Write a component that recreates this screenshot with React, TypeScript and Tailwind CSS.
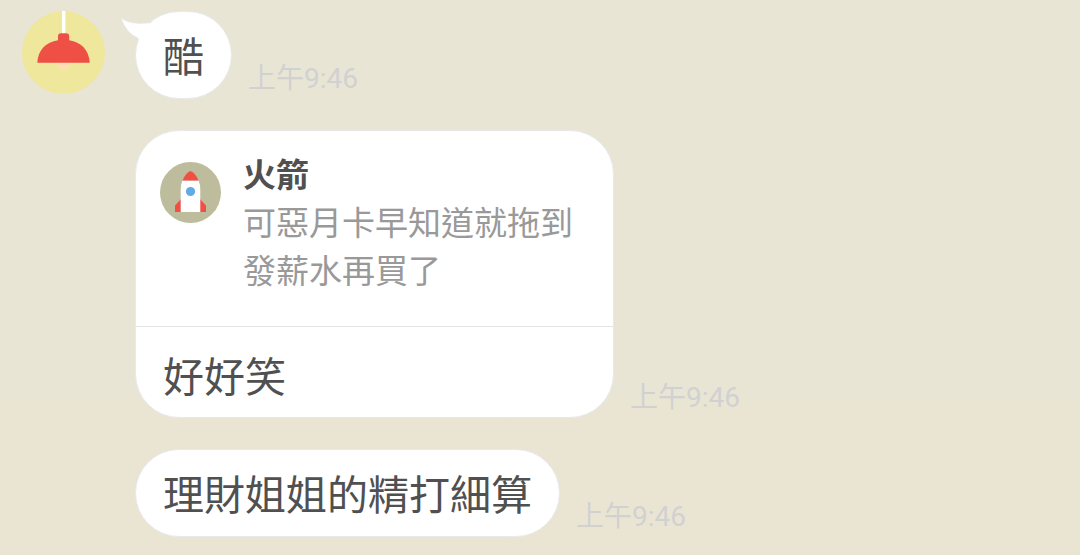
import type { ReactNode } from "react";

function LampAvatar() {
  return (
    <svg viewBox="0 0 84 84" className="block size-[84px]" role="img" aria-label="吊燈">
      <circle cx="42.5" cy="41.5" r="41.5" fill="#eee79c" />
      <rect x="41" y="0" width="3.4" height="24" fill="#fff" />
      <circle cx="42.6" cy="51.8" r="7" fill="#ffdfb0" />
      <path d="M16.3 51.8C17 39 25 31 37 29.300V25.500Q37 22.300 40.200 22.300H45Q48.200 22.300 48.200 25.500V29.300C60 31 68 39 68.800 51.800z" fill="#ee5045" />
    </svg>
  );
}

function RocketAvatar() {
  return (
    <svg viewBox="0 0 61 61" className="block size-[61px] shrink-0" role="img" aria-label="火箭">
      <circle cx="30.500" cy="30.500" r="30.500" fill="#bdbc9c" />
      <path d="M15 50V43.500L21 37V50zM46 50V43.500L40 37V50z" fill="#ee5045" />
      <path d="M20.700 50V28Q20.700 22 22.500 18.500H38.500Q40.300 22 40.300 28V50z" fill="#fff" />
      <path d="M22.500 18.500Q25.500 11 30.500 9Q35.500 11 38.500 18.500z" fill="#ee5045" />
      <circle cx="30.500" cy="29.500" r="4.600" fill="#62a9e6" />
    </svg>
  );
}

function Row({ children }: { children: ReactNode }) {
  return (
    <li className="flex items-end gap-4">
      {children}
      <time className="pb-[3px] text-[28px] leading-[34px] text-[#d1d1d2]">上午9:46</time>
    </li>
  );
}

export default function App() {
  return (
    <main className="flex min-h-screen items-start gap-[30px] bg-linear-to-b from-[#e8e5d5] from-70% to-[#eae5d3] to-73% pt-[11px] pl-[21px] font-[Roboto,'Noto_Sans_CJK_TC',sans-serif] text-[#505050]">
      <LampAvatar />
      <ul className="flex flex-col items-start gap-[31px]">
        <Row>
          <div className="relative rounded-[44px] border border-[#e9e9eb] bg-white px-[27px] pt-4 pb-[10px] text-[41px] leading-[60px]">
            <svg viewBox="0 0 34 34" className="absolute -top-px -left-4 size-[34px]" aria-hidden="true">
              <path d="M1 7Q9 14 29 12L34 20L22 32L18 27Q6 22 1 7z" fill="#fff" />
              <path d="M28 12Q9 14 1 7Q6 22 18 27" fill="none" stroke="#e5e5e8" strokeWidth="0.500" />
            </svg>
            酷
          </div>
        </Row>
        <Row>
          <article className="w-[479px] rounded-[44px] border border-[#e9e9eb] bg-white">
            <blockquote className="flex gap-[22px] border-b border-[#e3e3e3] px-6 pt-[21px] pb-[30px]">
              <div className="pt-[10px]"><RocketAvatar /></div>
              <div className="text-[33px] leading-[48px]">
                <h2 className="font-bold">火箭</h2>
                <p className="text-[#999]">可惡月卡早知道就拖到發薪水再買了</p>
              </div>
            </blockquote>
            <p className="px-[27px] pt-[21px] pb-[9px] text-[41px] leading-[60px]">好好笑</p>
          </article>
        </Row>
        <Row>
          <p className="rounded-[44px] border border-[#e9e9eb] bg-white px-[27px] pt-4 pb-[10px] text-[41px] leading-[60px]">理財姐姐的精打細算</p>
        </Row>
      </ul>
    </main>
  );
}
